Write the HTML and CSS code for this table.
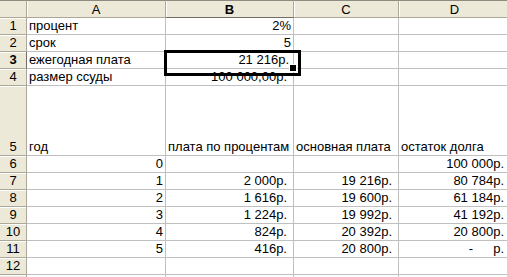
FILE: index.html
```html
<!DOCTYPE html>
<html lang="ru">
<head>
  <meta charset="UTF-8" />
  <title>Кредит - расчёт</title>
  <link rel="stylesheet" href="styles.css">
</head>
<body>

  <!-- Sheet grid: header row, then rows 1..13 -->
  <div class="sheet">
    <div class="corner"></div>
    <div class="col-head">A</div>
    <div class="col-head selected">B</div>
    <div class="col-head">C</div>
    <div class="col-head">D</div>

    <div class="row-head">1</div>
    <div class="cell">процент</div>
    <div class="cell num">2%</div>
    <div class="cell"></div>
    <div class="cell"></div>

    <div class="row-head">2</div>
    <div class="cell">срок</div>
    <div class="cell num">5</div>
    <div class="cell"></div>
    <div class="cell"></div>

    <div class="row-head selected">3</div>
    <div class="cell">ежегодная плата</div>
    <div class="cell num active">21 216р.</div>
    <div class="cell"></div>
    <div class="cell"></div>

    <div class="row-head">4</div>
    <div class="cell">размер ссуды</div>
    <div class="cell money">100 000,00р.</div>
    <div class="cell"></div>
    <div class="cell"></div>

    <div class="row-head">5</div>
    <div class="cell">год</div>
    <div class="cell">плата по процентам</div>
    <div class="cell">основная плата</div>
    <div class="cell">остаток долга</div>

    <div class="row-head">6</div>
    <div class="cell num">0</div>
    <div class="cell"></div>
    <div class="cell"></div>
    <div class="cell money">100 000р.</div>

    <div class="row-head">7</div>
    <div class="cell num">1</div>
    <div class="cell money">2 000р.</div>
    <div class="cell money">19 216р.</div>
    <div class="cell money">80 784р.</div>

    <div class="row-head">8</div>
    <div class="cell num">2</div>
    <div class="cell money">1 616р.</div>
    <div class="cell money">19 600р.</div>
    <div class="cell money">61 184р.</div>

    <div class="row-head">9</div>
    <div class="cell num">3</div>
    <div class="cell money">1 224р.</div>
    <div class="cell money">19 992р.</div>
    <div class="cell money">41 192р.</div>

    <div class="row-head">10</div>
    <div class="cell num">4</div>
    <div class="cell money">824р.</div>
    <div class="cell money">20 392р.</div>
    <div class="cell money">20 800р.</div>

    <div class="row-head">11</div>
    <div class="cell num">5</div>
    <div class="cell money">416р.</div>
    <div class="cell money">20 800р.</div>
    <div class="cell money"><span class="zero">-</span><span>р.</span></div>

    <div class="row-head">12</div>
    <div class="cell"></div>
    <div class="cell"></div>
    <div class="cell"></div>
    <div class="cell"></div>

    <!-- row 13 is only partly in view -->
    <div class="row-head"></div>
    <div class="cell"></div>
    <div class="cell"></div>
    <div class="cell"></div>
    <div class="cell"></div>
  </div>

</body>
</html>
```

FILE: styles.css
```css
* { box-sizing: border-box; }
body {
  margin: 0;
  background: #fff;
  overflow: hidden;
  font-family: "Liberation Sans", Arial, sans-serif;
  font-size: 13px;
  color: #000;
}

.sheet {
  display: grid;
  grid-template-columns: 27px 139px 128px 105px 112px;
  grid-template-rows: 18px repeat(4, 17px) 70px repeat(8, 17px);
  width: 511px;
}

/* Headers */
.corner,
.col-head,
.row-head {
  background: #ece9d8;
  border-right: 1px solid #aca899;
  border-bottom: 1px solid #aca899;
}

.corner,
.col-head {
  border-top: 1px solid #8e8c80;
}

.col-head {
  display: flex;
  align-items: center;
  justify-content: center;
  box-shadow: inset 1px 0 #fff;
  padding-top: 1px;
}

.row-head {
  display: flex;
  align-items: flex-end;
  justify-content: center;
  padding-bottom: 1px;
  line-height: 15px;
  box-shadow: inset 0 1px #fff;
}

.col-head.selected {
  font-weight: bold;
  border-bottom-color: #716f64;
}

.row-head.selected {
  font-weight: bold;
  border-right-color: #716f64;
}

/* Cells */
.cell {
  display: flex;
  align-items: flex-end;
  border-right: 1px solid #c0c0c0;
  border-bottom: 1px solid #c0c0c0;
  padding: 0 2px 1px 2px;
  line-height: 15px;
  white-space: nowrap;
}

.num {
  justify-content: flex-end;
  padding-right: 2px;
}

.money {
  justify-content: flex-end;
  padding-right: 6px;
}

/* accounting zero: dash, then room for the digits */
.money .zero {
  margin-right: 20px;
}

/* Active cell frame with fill handle */
.active {
  position: relative;
  padding-right: 4px;
}

.active::before {
  content: "";
  position: absolute;
  left: -2px;
  top: -2px;
  width: 131px;
  height: 20px;
  border: 3px solid #000;
}

.active::after {
  content: "";
  position: absolute;
  left: 124px;
  top: 13px;
  width: 6px;
  height: 6px;
  background: #000;
  outline: 1px solid #fff;
}
```
